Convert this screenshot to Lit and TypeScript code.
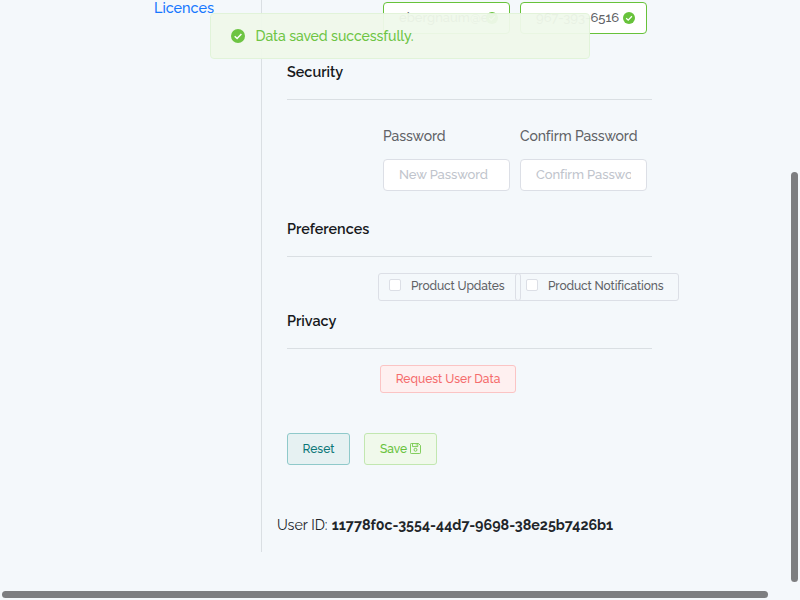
import { LitElement, html, css, svg } from "lit";
import { customElement } from "lit/decorators.js";

const check = html`<svg class="check" viewBox="0 0 14 14">
  ${svg`<circle cx="7" cy="7" r="7" fill="#67c23a"></circle><path d="M3.7 7.2 6.1 9.5 10.4 5" fill="none" stroke="#fff" stroke-width="1.5"></path>`}
</svg>`;

@customElement("app-root")
export class AppRoot extends LitElement {
  static styles = css`
    :host { display: block; position: relative; width: 800px; height: 600px; overflow: hidden; background: #f4f8fb; font-family: Raleway, Lato, sans-serif; font-size: 14px; font-weight: 500; color: #212529; }
    * { box-sizing: border-box; }
    .page { display: flex; height: 552px; }
    .side { width: 262px; border-right: 1px solid #dadfe3; padding: 0 0 0 154px; }
    .link { display: block; margin-top: -2px; line-height: 20px; font-size: 14.4px; color: #1677ff; text-decoration: none; white-space: nowrap; }
    .main { flex: 1; padding-left: 25px; display: flex; flex-direction: column; align-items: flex-start; white-space: nowrap; }
    .row { display: flex; gap: 10px; margin-left: 96px; }
    .field { width: 127px; height: 32px; border: 1px solid #dcdfe6; border-radius: 4px; background: #fff; padding: 0 15px; display: flex; align-items: center; font-size: 13px; color: #c0c4cc; }
    .field span { overflow: hidden; line-height: 30px; height: 30px; }
    .field .hint { letter-spacing: -.08px; }
    .ok { border-color: #67c23a; color: #606266; padding-right: 11px; }
    .ok span { flex: none; width: 84px; overflow: visible; }
    .ok .check { width: 12px; height: 12px; flex: none; margin-left: auto; }
    .top { margin-top: 2px; }
    .title { height: 20px; line-height: 20px; font-weight: 600; font-size: 14.4px; color: #17191c; }
    .t1 { margin-top: 28px; }
    .t2 { margin-top: 28px; }
    .t3 { margin-top: 10px; }
    .rule { width: 365px; height: 1px; background: #dadfe3; margin-top: 17px; }
    .labels { margin-top: 26px; height: 20px; line-height: 20px; font-size: 14px; letter-spacing: -.1px; color: #606266; }
    .labels span { width: 127px; }
    .inputs { margin-top: 13px; }
    .checks { display: flex; margin: 16px 0 0 91px; }
    .box { height: 28px; border: 1px solid #dcdfe6; border-radius: 3px; display: flex; padding: 0 10px; line-height: 24px; font-size: 12px; letter-spacing: -.12px; color: #606266; }
    .box i { width: 12px; height: 12px; flex: none; border: 1px solid #dcdfe6; border-radius: 2px; background: #fff; margin: 5px 10px 0 0; }
    .updates { width: 143px; }
    .notes { width: 164px; margin-left: -6px; }
    .btn { display: flex; align-items: center; justify-content: center; border: 1px solid; border-radius: 3px; font: inherit; font-size: 12px; padding: 0 0 1px; }
    .request { margin: 16px 0 0 93px; width: 136px; height: 28px; color: #f56c6c; background: #fef0f0; border-color: #fbc4c4; }
    .actions { display: flex; gap: 14px; margin-top: 40px; }
    .reset { width: 63px; height: 32px; color: #0b7778; background: #e6f1f2; border-color: #8fc9ca; }
    .save { width: 73px; height: 32px; color: #67c23a; background: #f0f9eb; border-color: #c2e7b0; }
    .disk { width: 11px; height: 11px; margin-left: 3px; }
    .id { margin: 50px 0 0 -10px; line-height: 20px; font-size: 14.25px; font-weight: 400; }
    .id b { font-weight: 700; margin-left: .6px; }
    .toast { position: absolute; left: 210px; top: 13px; width: 380px; height: 46px; border: 1px solid #e1f3d8; border-radius: 4px; background: #f0f9eb; opacity: .95; display: flex; align-items: center; padding-left: 20px; padding-bottom: 1px; color: #67c23a; font-size: 14px; letter-spacing: -.05px; }
    .toast .check { width: 14px; height: 14px; margin-right: 10.5px; }
    .bar { position: absolute; background: #7d7e80; border-radius: 4px; }
    .v { left: 791px; top: 172px; width: 7px; height: 410px; }
    .h { left: 2px; top: 591px; width: 766px; height: 7px; }
  `;

  render() {
    return html`
      <div class="page">
        <nav class="side"><a class="link">Licences</a></nav>
        <main class="main">
          <div class="row top">
            <div class="field ok"><span>ebergnaum@e</span>${check}</div>
            <div class="field ok"><span>967-393-6516</span>${check}</div>
          </div>
          <div class="title t1">Security</div>
          <div class="rule"></div>
          <div class="row labels"><span>Password</span><span>Confirm Password</span></div>
          <div class="row inputs">
            <div class="field"><span class="hint">New Password</span></div>
            <div class="field"><span class="hint">Confirm Passwo</span></div>
          </div>
          <div class="title t2">Preferences</div>
          <div class="rule"></div>
          <div class="checks">
            <label class="box updates"><i></i><span>Product Updates</span></label>
            <label class="box notes"><i></i><span>Product Notifications</span></label>
          </div>
          <div class="title t3">Privacy</div>
          <div class="rule"></div>
          <button class="btn request"><span>Request User Data</span></button>
          <div class="actions">
            <button class="btn reset"><span>Reset</span></button>
            <button class="btn save"><span>Save</span><svg class="disk" viewBox="0 0 12 12" fill="none" stroke="currentColor" stroke-width=".9"><path d="M1.5.5h7.7l2.3 2.3v7.7a1 1 0 0 1-1 1h-9a1 1 0 0 1-1-1v-9a1 1 0 0 1 1-1zM2.8.5v3.4h5.7V.5M6.8 1.5v1.2"></path><circle cx="6" cy="7.4" r="1.6"></circle></svg></button>
          </div>
          <div class="id"><span>User ID: </span><b>11778f0c-3554-44d7-9698-38e25b7426b1</b></div>
        </main>
      </div>
      <div class="toast">${check}<span>Data saved successfully.</span></div>
      <div class="bar v"></div>
      <div class="bar h"></div>
    `;
  }
}
